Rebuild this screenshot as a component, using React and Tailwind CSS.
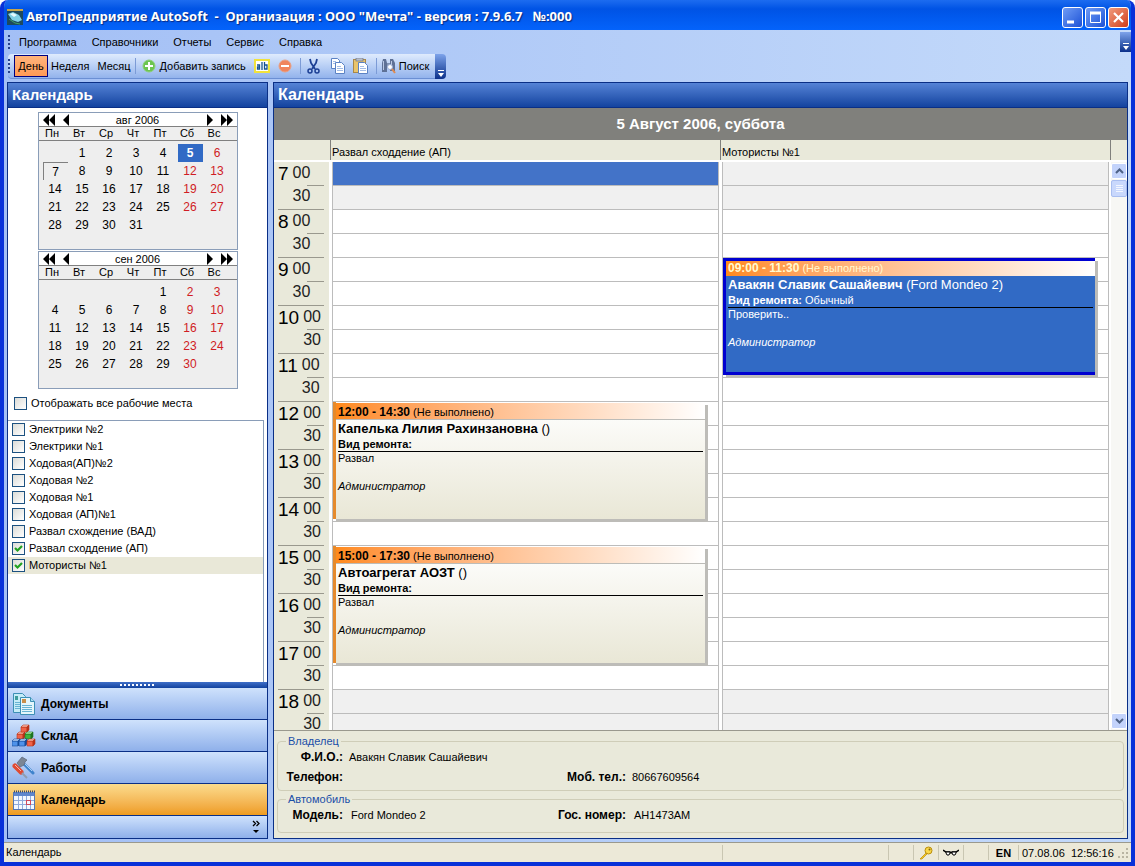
// App.jsx - Ventana principal: calendario de trabajos del taller
import React, { useState } from 'react';

const WEEKDAYS = ['Пн', 'Вт', 'Ср', 'Чт', 'Пт', 'Сб', 'Вс'];

const MONTHS = [
    { title: 'авг 2006', offset: 1, days: 31, selected: 5, today: 7 },
    { title: 'сен 2006', offset: 4, days: 30 },
];

const PLACES = [
    'Электрики №2',
    'Электрики №1',
    'Ходовая(АП)№2',
    'Ходовая №2',
    'Ходовая №1',
    'Ходовая (АП)№1',
    'Развал схождение (ВАД)',
    'Развал сходдение (АП)',
    'Мотористы №1',
];

const FIRST_HOUR = 7;
const HOURS = [7, 8, 9, 10, 11, 12, 13, 14, 15, 16, 17, 18];
const ROW_HEIGHT = 24;

const COLUMNS = [
    {
        title: 'Развал сходдение (АП)',
        cursor: 0,
        events: [
            { from: 12, to: 14.5, time: '12:00 - 14:30', name: 'Капелька Лилия Рахинзановна', car: '()', kind: '', note: 'Развал' },
            { from: 15, to: 17.5, time: '15:00 - 17:30', name: 'Автоагрегат АОЗТ', car: '()', kind: '', note: 'Развал' },
        ],
    },
    {
        title: 'Мотористы №1',
        events: [
            { from: 9, to: 11.5, time: '09:00 - 11:30', name: 'Авакян Славик Сашайевич', car: '(Ford Mondeo 2)', kind: 'Обычный', note: 'Проверить..', active: true },
        ],
    },
];

/* ---------- Iconos ---------- */

const AppIcon = () => (
    <svg width="16" height="16" viewBox="0 0 16 16" className="shrink-0">
        <rect width="16" height="16" fill="#1d4a5e" />
        <rect width="16" height="2" fill="#c9a54a" />
        <path d="M1 5l5-2 6 3 3 5-4 2-6-2z" fill="#7fd0e6" />
        <path d="M3 5l3-1 4 2-3 2z" fill="#e6fbff" />
        <path d="M2 10l6 4 5 1" stroke="#3fa06a" fill="none" />
    </svg>
);

const PlusIcon = () => (
    <svg width="14" height="14" viewBox="0 0 14 14">
        <circle cx="7" cy="7" r="6" fill="#6cc551" stroke="#8ccf78" />
        <path d="M7 3v8M3 7h8" stroke="#fff" strokeWidth="2" />
    </svg>
);

const RenameIcon = () => (
    <svg width="16" height="14" viewBox="0 0 16 14">
        <rect x="1" y="1" width="14" height="12" fill="#fff" stroke="#f1e23c" strokeWidth="2" />
        <path d="M3 6h2.500v4H3.500V8h2M8 3v8M10.500 3v7h2.500V6h-2.500" fill="none" stroke="#15528f" strokeWidth="1.300" />
    </svg>
);

const MinusIcon = () => (
    <svg width="14" height="14" viewBox="0 0 14 14">
        <circle cx="7" cy="7" r="6" fill="#f0845c" stroke="#e9a084" />
        <path d="M3 7h8" stroke="#fff" strokeWidth="2" />
    </svg>
);

const CutIcon = () => (
    <svg width="13" height="16" viewBox="0 0 13 16" fill="none" stroke="#1c3f94">
        <path d="M3 1l1 4 4 6M10 1L9 5l-4 6" strokeWidth="1.800" />
        <circle cx="3" cy="13" r="2" strokeWidth="1.500" />
        <circle cx="10" cy="13" r="2" strokeWidth="1.500" />
    </svg>
);

const CopyIcon = () => (
    <svg width="16" height="16" viewBox="0 0 16 16" fill="#fff" stroke="#5b82c4">
        <path d="M1.500 .5h6l2 2v8h-8z" />
        <path d="M5.500 4.500h6l3 3v8h-9z" />
        <path d="M3 3.500h3M3 5.500h2M7 8.500h4M7 10.500h6M7 12.500h6" stroke="#a3bce6" />
    </svg>
);

const PasteIcon = () => (
    <svg width="16" height="16" viewBox="0 0 16 16">
        <rect x=".5" y="1.500" width="12" height="13" fill="#e9c46c" stroke="#a8884a" />
        <rect x="3" y="0" width="7" height="3" fill="#b9bfc9" stroke="#6f7687" strokeWidth=".7" />
        <path d="M5.500 4.500h6l3 3v8h-9z" fill="#fff" stroke="#5b82c4" />
        <path d="M7 8.500h4M7 10.500h6M7 12.500h6" stroke="#a3bce6" />
    </svg>
);

const SearchIcon = () => (
    <svg width="16" height="16" viewBox="0 0 16 16">
        <path d="M2 1h3l1 4v9H1V5zM9 1h3l2 4v8H9z" fill="#5e7196" />
        <path d="M2.500 3v9M10.500 3v4" stroke="#b9c8e4" />
        <path d="M6 5h3v3H6z" fill="#7f90b0" />
        <circle cx="9" cy="9" r="2.500" fill="#fff" stroke="#9aaed4" />
        <path d="M11 11l3 4" stroke="#e08a4e" strokeWidth="2" />
    </svg>
);

const DocumentsIcon = () => (
    <svg width="24" height="24" viewBox="0 0 24 24">
        <path d="M1.500 1.500h9l3 3v16h-12z" fill="#c6ecf7" stroke="#3d8fb5" />
        <rect x="3" y="4" width="3" height="4" fill="#3f9c9c" />
        <path d="M3 10.500h5M3 12.500h5M3 14.500h5M3 16.500h5" stroke="#68b3d3" />
        <path d="M8.500 5.500h10l4 4v13h-14z" fill="#e4f6fb" stroke="#3d8fb5" />
        <path d="M18.500 5.500v4h4" fill="#a8dcf0" stroke="#3d8fb5" />
        <rect x="10" y="7" width="4" height="4" fill="#c98f4a" />
        <path d="M10 13.500h10M10 15.500h10M10 17.500h10M10 19.500h10" stroke="#68b3d3" />
    </svg>
);

const Cube = ({ x, y, front, top, side }) => (
    <g transform={`translate(${x} ${y})`} stroke={side} strokeWidth=".6">
        <path d="M0 2h6v5H0z" fill={front} />
        <path d="M0 2l2-2h6L6 2z" fill={top} />
        <path d="M6 2l2-2v5L6 7z" fill={side} />
    </g>
);

const StockIcon = () => (
    <svg width="24" height="24" viewBox="0 0 24 24">
        <Cube x={5} y={8} front="#f0634a" top="#fcc0b2" side="#b8321a" />
        <Cube x={9} y={1} front="#f0634a" top="#fcc0b2" side="#b8321a" />
        <Cube x={13} y={8} front="#3fb53f" top="#b5efaa" side="#1f7420" />
        <Cube x={0} y={15} front="#4f92ea" top="#c8e2ff" side="#164a9c" />
        <Cube x={7} y={15} front="#4f92ea" top="#c8e2ff" side="#164a9c" />
        <Cube x={15} y={15} front="#f0634a" top="#fcc0b2" side="#b8321a" />
    </svg>
);

const WorksIcon = () => (
    <svg width="24" height="24" viewBox="0 0 24 24" fill="none">
        <path d="M11 7l10 10" stroke="#3f83cc" strokeWidth="3" strokeLinecap="round" />
        <path d="M11 6l9 9" stroke="#a9d0f5" strokeWidth="1" />
        <path d="M5 7l5-6 5 3-2 2-1 3-4 2z" fill="#7b8695" stroke="#5c6675" strokeWidth=".7" />
        <path d="M3 10l6 6" stroke="#df4a33" strokeWidth="5" strokeLinecap="round" />
        <path d="M3 9l6 6" stroke="#f9b3a5" strokeWidth="1" />
        <path d="M10 17l5 5" stroke="#8f9db1" strokeWidth="2" />
    </svg>
);

const CalendarIcon = () => (
    <svg width="24" height="24" viewBox="0 0 24 24">
        <rect x="1.500" y="4.500" width="21" height="17" fill="#f4f8ff" stroke="#5578b5" />
        <rect x="2" y="4" width="20" height="4" fill="#5f86cc" />
        <path d="M2 3.500h21" stroke="#3c4a68" strokeWidth="2" strokeDasharray="1 1" />
        <path d="M2 12.500h20M2 16.500h20M6.500 8v13M10.500 8v13M14.500 8v13M18.500 8v13" stroke="#8fabdc" />
        <rect x="14.500" y="12.500" width="4" height="4" fill="none" stroke="#d0485c" />
    </svg>
);

const KeyIcon = () => (
    <svg width="14" height="14" viewBox="0 0 14 14">
        <path d="M8 6l-7 7h2l1-1 1-1 1-1 3-3z" fill="#f3c623" stroke="#b98d0a" strokeWidth=".7" />
        <circle cx="9.500" cy="4.500" r="3.500" fill="#f9d84a" stroke="#b98d0a" />
        <circle cx="10.500" cy="3.500" r="1" fill="#8a6a08" />
    </svg>
);

const GlassesIcon = () => (
    <svg width="16" height="8" viewBox="0 0 16 8">
        <path d="M0 1l3 2h4l1 1 1-1h4l3-2" fill="none" stroke="#000" strokeWidth="1.500" />
        <path d="M3 3h4v1L6 6H4L3 4zM9 3h4v1l-1 2h-2L9 4z" fill="#fff" stroke="#000" />
    </svg>
);

const Overflow = ({ className }) => (
    <button aria-label="Ещё" className={`flex flex-col items-center justify-end bg-linear-to-b from-[#7ea3ea] to-[#0b2f8a] pb-0.5 ${className}`}>
        <svg width="7" height="7" viewBox="0 0 7 7">
            <path d="M1 .5h6" stroke="#fff" />
            <path d="M1 3h6L4 7z" fill="#fff" />
        </svg>
    </button>
);

const Grip = () => (
    <svg width="3" height="16" viewBox="0 0 3 16" className="shrink-0">
        <path d="M1 1v16" stroke="#27418c" strokeWidth="2" strokeDasharray="2 2" />
    </svg>
);

/* ---------- Ventana ---------- */

const TitleBar = () => (
    <header className="flex h-[30px] shrink-0 items-center justify-between bg-linear-to-b from-[#1c6cf0] via-[#0053e5] via-30% to-[#0463fb] pr-0.5 pl-[3px]">
        <div className="flex items-center gap-[3px] pt-1">
            <AppIcon />
            <h1 className="font-['Noto_Sans','Open_Sans',sans-serif] text-[13px] font-bold whitespace-pre text-white [text-shadow:1px_1px_1px_#0a2a80]">
                {'АвтоПредприятие AutoSoft  -  Организация : ООО "Мечта" - версия : 7.9.6.7   №:000'}
            </h1>
        </div>
        <div className="flex gap-0.5 pt-1">
            <button aria-label="Свернуть" className="size-[21px] rounded-[3px] border border-white bg-linear-to-br from-[#6f9bf5] to-[#1c4fd6]">
                <svg width="19" height="19" viewBox="0 0 19 19"><path d="M4 14h7" stroke="#fff" strokeWidth="3" /></svg>
            </button>
            <button aria-label="Развернуть" className="size-[21px] rounded-[3px] border border-white bg-linear-to-br from-[#6f9bf5] to-[#1c4fd6]">
                <svg width="19" height="19" viewBox="0 0 19 19" fill="none" stroke="#fff"><path d="M4.500 4.500h10v10h-10z" /><path d="M4 5h11" strokeWidth="3" /></svg>
            </button>
            <button aria-label="Закрыть" className="size-[21px] rounded-[3px] border border-white bg-linear-to-br from-[#f09a7c] to-[#cf3a12]">
                <svg width="19" height="19" viewBox="0 0 19 19"><path d="M5 5l9 9M14 5l-9 9" stroke="#fff" strokeWidth="2.200" /></svg>
            </button>
        </div>
    </header>
);

const MenuBar = () => (
    <nav className="flex h-6 shrink-0 items-center pl-1">
        <Grip />
        <div className="flex gap-[15px] pl-2">
            {['Программа', 'Справочники', 'Отчеты', 'Сервис', 'Справка'].map((item) => (
                <button key={item}>{item}</button>
            ))}
        </div>
        <Overflow className="ml-auto h-5 w-[11px]" />
    </nav>
);

const Divider = () => <span className="h-4 w-px bg-[#7c9bd6]" />;

const ToolBar = () => (
    <div className="flex h-[25px] shrink-0 pl-1">
        <div className="flex items-center rounded-l-sm border-b border-[#6b8fd4] bg-linear-to-b from-[#dfebfd] to-[#93b3ec] pr-1.5">
            <Grip />
            <button className="ml-[3px] h-[22px] w-[34px] border border-[#000080] bg-linear-to-b from-[#ffb47c] to-[#ff9a55]">День</button>
            <button className="ml-[3px]">Неделя</button>
            <button className="ml-2">Месяц</button>
            <span className="w-1" />
            <Divider />
            <button className="ml-1.5 flex items-center gap-1"><PlusIcon />Добавить запись</button>
            <button className="ml-2" aria-label="Переименовать"><RenameIcon /></button>
            <button className="mx-2" aria-label="Удалить"><MinusIcon /></button>
            <Divider />
            <button className="ml-1.5" aria-label="Вырезать"><CutIcon /></button>
            <button className="ml-2.5" aria-label="Копировать"><CopyIcon /></button>
            <button className="mx-[7px]" aria-label="Вставить"><PasteIcon /></button>
            <Divider />
            <button className="ml-1 flex items-center gap-0.5"><SearchIcon />Поиск</button>
        </div>
        <Overflow className="w-[11px] rounded-r-sm" />
    </div>
);

const PanelTitle = ({ size, children }) => (
    <h2 className={`h-[25px] shrink-0 border-b border-[#0a2f86] bg-linear-to-b from-[#5583d6] to-[#13439f] px-1 leading-6 font-bold text-white ${size}`}>
        {children}
    </h2>
);

/* ---------- Panel izquierdo ---------- */

const Month = ({ title, offset, days, selected, today }) => {
    const cells = Array.from({ length: 35 }, (_, i) => {
        const day = i - offset + 1;
        return day > 0 && day <= days ? day : null;
    });
    const weeks = [0, 1, 2, 3, 4].map((w) => cells.slice(w * 7, w * 7 + 7));

    const dayStyle = (day, col) => {
        if (day && day === selected) return 'bg-[#316ac5] font-bold text-white';
        if (day && day === today) return 'border-t border-l border-[#808080]';
        return col > 4 ? 'text-[#d01c24]' : '';
    };

    return (
        <section className="h-[138px] w-[200px] border border-[#8a9db8] bg-[#eeeeee] text-[12px]">
            <div className="flex h-[14px] items-center border-b border-[#808080] bg-white px-1">
                <button aria-label="Предыдущий год">
                    <svg width="12" height="12" viewBox="0 0 12 12"><path d="M6 0v12L0 6zM12 0v12L6 6z" /></svg>
                </button>
                <button aria-label="Предыдущий месяц" className="ml-2">
                    <svg width="6" height="12" viewBox="0 0 6 12"><path d="M6 0v12L0 6z" /></svg>
                </button>
                <span className="flex-1 pt-px text-center text-[11px] leading-3">{title}</span>
                <button aria-label="Следующий месяц" className="mr-2">
                    <svg width="6" height="12" viewBox="0 0 6 12"><path d="M0 0v12l6-6z" /></svg>
                </button>
                <button aria-label="Следующий год">
                    <svg width="12" height="12" viewBox="0 0 12 12"><path d="M0 0v12l6-6zM6 0v12l6-6z" /></svg>
                </button>
            </div>
            <div className="border-b border-[#808080]">
                <div className="grid h-[13px] w-[189px] grid-cols-7 text-center text-[11px] leading-3">
                    {WEEKDAYS.map((d) => <span key={d}>{d}</span>)}
                </div>
            </div>
            <table className="mt-[3px] ml-[3px] w-[189px] table-fixed text-center">
                <tbody>
                    {weeks.map((week, w) => (
                        <tr key={w} className="h-[18px]">
                            {week.map((day, col) => (
                                <td key={col} className="p-0 px-px">
                                    <div className={`h-[18px] leading-[18px] ${dayStyle(day, col)}`}>{day}</div>
                                </td>
                            ))}
                        </tr>
                    ))}
                </tbody>
            </table>
        </section>
    );
};

const CheckBox = ({ label, checked, onChange, highlighted }) => (
    <label className={`flex h-[17px] items-center gap-1 pl-1 ${highlighted ? 'bg-[#e9e8d8]' : ''}`}>
        <span className="grid">
            <input
                type="checkbox"
                checked={checked}
                onChange={onChange}
                className="peer col-start-1 row-start-1 size-[13px] appearance-none border border-[#1c5180] bg-linear-to-br from-[#dcdcd7] to-white"
            />
            <svg width="13" height="13" viewBox="0 0 13 13" className="pointer-events-none invisible col-start-1 row-start-1 peer-checked:visible">
                <path d="M3 6l2.500 2.500L10 4" fill="none" stroke="#21a121" strokeWidth="2.200" />
            </svg>
        </span>
        {label}
    </label>
);

const NAV = [
    { title: 'Документы', icon: DocumentsIcon },
    { title: 'Склад', icon: StockIcon },
    { title: 'Работы', icon: WorksIcon },
    { title: 'Календарь', icon: CalendarIcon, active: true },
];

const SideBar = () => {
    const [checked, setChecked] = useState(['Развал сходдение (АП)', 'Мотористы №1']);
    const [showAll, setShowAll] = useState(false);

    const toggle = (place) => {
        setChecked(checked.includes(place) ? checked.filter((p) => p !== place) : [...checked, place]);
    };

    return (
        <aside className="flex w-[261px] shrink-0 flex-col border border-[#0a2f86] bg-white">
            <PanelTitle size="text-[15px]">Календарь</PanelTitle>
            <div className="mt-1 flex flex-col items-center gap-px">
                {MONTHS.map((month) => <Month key={month.title} {...month} />)}
            </div>
            <div className="mt-1.5 mb-2 pl-0.5">
                <CheckBox label="Отображать все рабочие места" checked={showAll} onChange={() => setShowAll(!showAll)} />
            </div>
            <ul className="mr-[3px] min-h-0 flex-1 border border-b-0 border-l-0 border-[#8a9db8]">
                {PLACES.map((place) => (
                    <li key={place}>
                        <CheckBox
                            label={place}
                            checked={checked.includes(place)}
                            onChange={() => toggle(place)}
                            highlighted={place === 'Мотористы №1'}
                        />
                    </li>
                ))}
            </ul>
            <div className="flex h-[6px] shrink-0 items-center justify-center bg-linear-to-b from-[#3f6fc8] to-[#13439f]">
                <svg width="36" height="2" viewBox="0 0 36 2"><path d="M0 1h36" stroke="#fff" strokeWidth="2" strokeDasharray="2 2" /></svg>
            </div>
            {NAV.map(({ title, icon: Icon, active }) => (
                <button
                    key={title}
                    className={`flex h-8 shrink-0 items-center gap-[5px] border-b border-[#0a2f86] bg-linear-to-b pl-1 text-[12px] font-bold ${active ? 'from-[#fbdc8c] to-[#ee9c1c]' : 'from-[#cfe2fc] to-[#8fb0ea]'}`}
                >
                    <Icon />
                    {title}
                </button>
            ))}
            <div className="flex h-[22px] shrink-0 items-center justify-end bg-linear-to-b from-[#cfe2fc] to-[#8fb0ea] pr-[7px]">
                <button aria-label="Настроить кнопки">
                    <svg width="8" height="14" viewBox="0 0 8 14">
                        <path d="M1 1l2.500 2.500L1 6M4.500 1L7 3.500 4.500 6" fill="none" stroke="#000" strokeWidth="1.300" />
                        <path d="M1 10h6l-3 3z" />
                    </svg>
                </button>
            </div>
        </aside>
    );
};

/* ---------- Agenda del día ---------- */

const Appointment = ({ from, to, time, name, car, kind, note, active }) => {
    const place = {
        top: (from - FIRST_HOUR) * 2 * ROW_HEIGHT,
        height: (to - from) * 2 * ROW_HEIGHT - 3,
    };
    const frame = active
        ? 'border-y-[3px] border-l-[3px] border-[#0000d0] bg-[#316ac5] text-white'
        : 'border-l-[3px] border-[#e58a2c] bg-linear-to-b from-white to-[#e9e7d6]';

    return (
        <article style={place} className={`absolute right-[13px] left-0 overflow-hidden shadow-[3px_3px_0_#bdbcb8] ${frame}`}>
            <div className={`bg-linear-to-r from-[#ff8a1a] to-white pl-0.5 ${active ? 'h-[15px] leading-[15px] text-[#fffbd0]' : 'mt-px h-[17px] border-b border-[#bdbcb8] leading-[18px]'}`}>
                <b className="text-[12px]">{time}</b> (Не выполнено)
            </div>
            <h3 className="pl-0.5 text-[13px] leading-[18px]">
                <b>{name}</b> {car}
            </h3>
            <p className="mx-0.5 border-b border-black leading-[13px]"><b>Вид ремонта:</b> {kind}</p>
            <p className="pl-0.5 leading-3">{note}</p>
            <p className="mt-4 pl-0.5 leading-3 italic">Администратор</p>
        </article>
    );
};

const Schedule = () => (
    <div className="flex min-h-0 flex-1 flex-col bg-white">
        <div className="h-8 shrink-0 bg-[#80807c] text-center text-[15px] leading-8 font-bold text-white">5 Август 2006, суббота</div>
        <div className="flex h-[22px] shrink-0 border-b-2 border-white bg-[#e9e9da] leading-6">
            <div className="w-14" />
            {COLUMNS.map((column) => (
                <div key={column.title} className="flex-1 border-l border-[#80807c] pl-px">{column.title}</div>
            ))}
            <div className="w-[17px] border-l border-[#80807c]" />
        </div>
        <div className="flex min-h-0 flex-1 overflow-hidden">
            <div className="w-[55px] shrink-0 bg-[#e9e9da] pr-[5px] pl-1">
                {HOURS.map((hour) => (
                    <div key={hour} className="flex h-12 gap-1 border-b border-[#9a998e]">
                        <span className="text-[19px] leading-6">{hour}</span>
                        <span className="flex flex-1 flex-col text-[16px] text-[#222]">
                            <span className="h-[23px] leading-[22px]">00</span>
                            <span className="h-px w-[17px] self-end bg-[#9a998e]" />
                            <span className="leading-5">30</span>
                        </span>
                    </div>
                ))}
            </div>
            <div className="ml-[3px] flex flex-1 gap-[3px]">
                {COLUMNS.map((column) => (
                    <div key={column.title} className="relative h-[576px] flex-1 border-x border-[#bcbcbc]">
                        {Array.from({ length: 24 }, (_, i) => {
                            const color = i === column.cursor ? 'bg-[#4373c8]' : i < 2 || i > 21 ? 'bg-[#f0f0f0]' : 'bg-white';
                            return <div key={i} className={`h-6 border-b border-[#bcbcbc] ${color}`} />;
                        })}
                        {column.events.map((event) => <Appointment key={event.time} {...event} />)}
                    </div>
                ))}
            </div>
            <div className="ml-0.5 flex w-4 shrink-0 flex-col bg-[#f7f7f4] py-px">
                <button aria-label="Вверх" className="grid h-4 place-items-center rounded-xs border border-white bg-[#c3d3fb]">
                    <svg width="9" height="6" viewBox="0 0 9 6"><path d="M1 5l3.500-3.500L8 5" fill="none" stroke="#4d6185" strokeWidth="2" /></svg>
                </button>
                <div className="mt-px grid h-[17px] place-items-center rounded-xs border border-[#a9bef0] bg-[#c9d8fc]">
                    <svg width="7" height="8" viewBox="0 0 7 8"><path d="M0 .5h7M0 2.500h7M0 4.500h7M0 6.500h7" stroke="#f2f6ff" /></svg>
                </div>
                <button aria-label="Вниз" className="mt-auto grid h-4 place-items-center rounded-xs border border-white bg-[#c3d3fb]">
                    <svg width="9" height="6" viewBox="0 0 9 6"><path d="M1 1l3.500 3.500L8 1" fill="none" stroke="#4d6185" strokeWidth="2" /></svg>
                </button>
            </div>
        </div>
    </div>
);

const Details = () => (
    <div className="shrink-0 border-t border-[#9a998e] bg-[#e9e9da] px-[3px] pt-1 pb-[5px]">
        <fieldset className="mb-0.5 h-14 rounded border border-[#cfcdb8] px-2">
            <legend className="px-0.5 leading-3 text-[#1b4fa8]">Владелец</legend>
            <dl className="mt-0.5 grid grid-cols-[57px_205px_66px_1fr] gap-x-1.5 gap-y-1 leading-4">
                <dt className="text-right text-[12px] font-bold">Ф.И.О.:</dt>
                <dd className="col-span-3">Авакян Славик Сашайевич</dd>
                <dt className="text-right text-[12px] font-bold">Телефон:</dt>
                <dd />
                <dt className="text-right text-[12px] font-bold whitespace-nowrap">Моб. тел.:</dt>
                <dd>80667609564</dd>
            </dl>
        </fieldset>
        <fieldset className="h-10 rounded border border-[#cfcdb8] px-2">
            <legend className="px-0.5 leading-3 text-[#1b4fa8]">Автомобиль</legend>
            <dl className="mt-0.5 grid grid-cols-[57px_191px_76px_1fr] gap-x-2 leading-4">
                <dt className="text-right text-[12px] font-bold">Модель:</dt>
                <dd>Ford Mondeo 2</dd>
                <dt className="text-right text-[12px] font-bold whitespace-nowrap">Гос. номер:</dt>
                <dd>AH1473AM</dd>
            </dl>
        </fieldset>
    </div>
);

const StatusBar = () => (
    <footer className="flex h-5 shrink-0 items-center border-t border-[#9a998e] bg-[#ece9d8] py-0.5">
        <div className="flex-1 pl-0.5">Календарь</div>
        <div className="h-full w-[166px] border-l border-[#c9c6b2]" />
        <div className="h-full w-[25px] border-l border-[#c9c6b2]" />
        <div className="grid h-full w-[25px] place-items-center border-l border-[#c9c6b2]"><KeyIcon /></div>
        <div className="grid h-full w-[25px] place-items-center border-l border-[#c9c6b2]"><GlassesIcon /></div>
        <div className="h-full w-[25px] border-l border-[#c9c6b2]" />
        <div className="h-full w-[30px] border-l border-[#c9c6b2] text-center leading-4 font-bold">EN</div>
        <div className="h-full w-[97px] border-l border-[#c9c6b2] pl-[3px] leading-4 whitespace-pre">07.08.06  12:56:16</div>
        <svg width="16" height="16" viewBox="0 0 16 16" fill="#b8b4a2">
            <path d="M11 3h2v2h-2zM7 7h2v2H7zM11 7h2v2h-2zM3 11h2v2H3zM7 11h2v2H7zM11 11h2v2h-2z" />
        </svg>
    </footer>
);

const App = () => (
    <div className="flex h-screen flex-col overflow-hidden rounded-t-lg border-x-4 border-b-4 border-[#0831d9] bg-linear-to-r from-[#a3bff5] to-[#c4dafa] font-['Liberation_Sans',Arial,sans-serif] text-[11px] text-black">
        <TitleBar />
        <MenuBar />
        <ToolBar />
        <main className="flex min-h-0 flex-1 gap-[5px] px-[3px] pt-[3px] pb-[3px]">
            <SideBar />
            <section className="flex min-w-0 flex-1 flex-col border border-[#0a2f86]">
                <PanelTitle size="text-[16px]">Календарь</PanelTitle>
                <Schedule />
                <Details />
            </section>
        </main>
        <StatusBar />
    </div>
);

export default App;
